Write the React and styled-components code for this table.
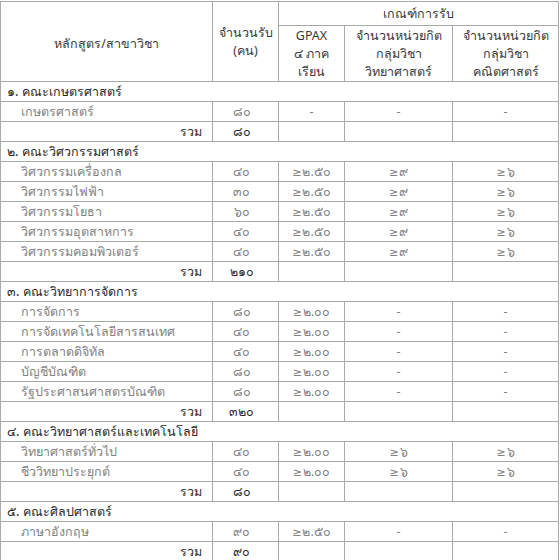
import React from "react";
import styled, { createGlobalStyle } from "styled-components";

const GlobalStyle = createGlobalStyle`
  html, body {
    margin: 0;
    padding: 0;
    background: #ffffff;
  }
  body {
    font-family: "Noto Sans", "DejaVu Sans", sans-serif;
  }
`;

const line = "#a5aca6";

const Page = styled.div`
  width: 560px;
  height: 560px;
  overflow: hidden;
  padding-top: 1px;
  box-sizing: border-box;
`;

const Table = styled.table`
  width: 558px;
  border-collapse: collapse;
  table-layout: fixed;
  font-size: 12.5px;
  color: #6f6f6f;
`;

const Th = styled.th`
  border: 1px solid ${line};
  font-weight: normal;
  color: #3a3a3a;
  text-align: center;
  vertical-align: middle;
  line-height: 18px;
  padding: ${(p) => (p.$down ? "4px 0 0" : "0")};
  height: ${(p) => p.$h || 20}px;
`;

const Row = styled.tr`
  height: 20px;
`;

const Cell = styled.td`
  border: 1px solid ${line};
  padding: 0;
  line-height: 19px;
  white-space: nowrap;
  text-align: ${(p) => p.$align || "center"};
  color: ${(p) => (p.$dark ? "#2e2e2e" : "#828282")};
  padding-left: ${(p) => p.$pl || 0}px;
  padding-right: ${(p) => p.$pr || 0}px;
`;

const Faculty = styled.td`
  border: 1px solid ${line};
  padding: 0 0 0 6px;
  line-height: 19px;
  color: #2a2a2a;
  font-weight: 500;
`;

const Ge = styled.span`
  font-size: 11px;
  margin-right: 1px;
`;

const faculties = [
  {
    name: "๑. คณะเกษตรศาสตร์",
    total: "๘๐",
    rows: [["เกษตรศาสตร์", "๘๐", "-", "-", "-"]],
  },
  {
    name: "๒. คณะวิศวกรรมศาสตร์",
    total: "๒๑๐",
    rows: [
      ["วิศวกรรมเครื่องกล", "๔๐", "≥๒.๕๐", "≥๙", "≥๖"],
      ["วิศวกรรมไฟฟ้า", "๓๐", "≥๒.๕๐", "≥๙", "≥๖"],
      ["วิศวกรรมโยธา", "๖๐", "≥๒.๕๐", "≥๙", "≥๖"],
      ["วิศวกรรมอุตสาหการ", "๔๐", "≥๒.๕๐", "≥๙", "≥๖"],
      ["วิศวกรรมคอมพิวเตอร์", "๔๐", "≥๒.๕๐", "≥๙", "≥๖"],
    ],
  },
  {
    name: "๓. คณะวิทยาการจัดการ",
    total: "๓๒๐",
    rows: [
      ["การจัดการ", "๘๐", "≥๒.๐๐", "-", "-"],
      ["การจัดเทคโนโลยีสารสนเทศ", "๔๐", "≥๒.๐๐", "-", "-"],
      ["การตลาดดิจิทัล", "๔๐", "≥๒.๐๐", "-", "-"],
      ["บัญชีบัณฑิต", "๘๐", "≥๒.๐๐", "-", "-"],
      ["รัฐประศาสนศาสตรบัณฑิต", "๘๐", "≥๒.๐๐", "-", "-"],
    ],
  },
  {
    name: "๔. คณะวิทยาศาสตร์และเทคโนโลยี",
    total: "๘๐",
    rows: [
      ["วิทยาศาสตร์ทั่วไป", "๔๐", "≥๒.๐๐", "≥๖", "≥๖"],
      ["ชีววิทยาประยุกต์", "๔๐", "≥๒.๐๐", "≥๖", "≥๖"],
    ],
  },
  {
    name: "๕. คณะศิลปศาสตร์",
    total: "๙๐",
    rows: [["ภาษาอังกฤษ", "๙๐", "≥๒.๕๐", "-", "-"]],
  },
];

// "≥" drawn a little smaller so it sits tight against the Thai digits
const Value = ({ text }) =>
  text.startsWith("≥") ? (
    <>
      <Ge>≥</Ge>
      {text.slice(1)}
    </>
  ) : (
    text
  );

const FacultyBlock = ({ faculty }) => (
  <>
    <Row>
      <Faculty colSpan={5}>{faculty.name}</Faculty>
    </Row>
    {faculty.rows.map((r) => (
      <Row key={r[0]}>
        <Cell $align="left" $pl={20}>{r[0]}</Cell>
        <Cell $pr={8}>{r[1]}</Cell>
        <Cell><Value text={r[2]} /></Cell>
        <Cell><Value text={r[3]} /></Cell>
        <Cell><Value text={r[4]} /></Cell>
      </Row>
    ))}
    <Row>
      <Cell $align="right" $pr={10} $dark>รวม</Cell>
      <Cell $pr={8} $dark>{faculty.total}</Cell>
      <Cell />
      <Cell />
      <Cell />
    </Row>
  </>
);

export default function App() {
  return (
    <Page>
      <GlobalStyle />
      <Table>
        <colgroup>
          <col style={{ width: 212 }} />
          <col style={{ width: 66 }} />
          <col style={{ width: 66 }} />
          <col style={{ width: 108 }} />
          <col style={{ width: 106 }} />
        </colgroup>
        <thead>
          <tr>
            <Th rowSpan={2} $down>หลักสูตร/สาขาวิชา</Th>
            <Th rowSpan={2}>
              จำนวนรับ
              <br />
              (คน)
            </Th>
            <Th colSpan={3} $h={23}>เกณฑ์การรับ</Th>
          </tr>
          <tr>
            <Th $h={55}>
              GPAX
              <br />๔ ภาค
              <br />
              เรียน
            </Th>
            <Th $h={55}>
              จำนวนหน่วยกิต
              <br />
              กลุ่มวิชา
              <br />
              วิทยาศาสตร์
            </Th>
            <Th $h={55}>
              จำนวนหน่วยกิต
              <br />
              กลุ่มวิชา
              <br />
              คณิตศาสตร์
            </Th>
          </tr>
        </thead>
        <tbody>
          {faculties.map((f) => (
            <FacultyBlock key={f.name} faculty={f} />
          ))}
        </tbody>
      </Table>
    </Page>
  );
}
